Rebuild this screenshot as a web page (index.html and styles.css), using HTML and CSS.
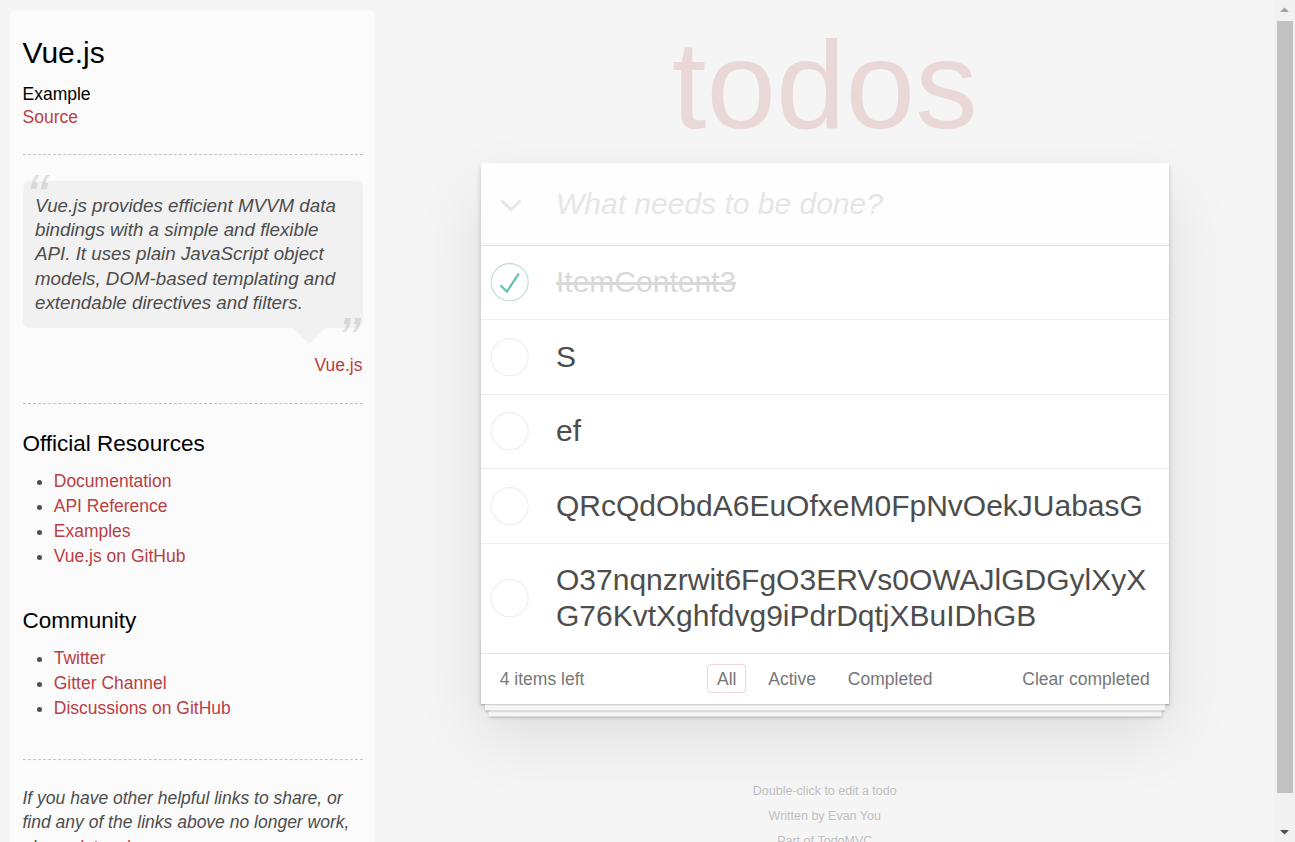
FILE: index.html
```html
<!DOCTYPE html>
<html lang="en">
<head>
<meta charset="utf-8">
<title>Vue.js • TodoMVC</title>
<link rel="stylesheet" href="styles.css">
</head>
<body>
<div class="page">
  <aside class="learn">
    <header class="learn-head">
      <h3>Vue.js</h3>
      <div class="source-links">
        <h5>Example</h5>
        <a href="#">Source</a>
      </div>
    </header>
    <hr>
    <blockquote class="quote speech-bubble">
      <p>Vue.js provides efficient MVVM data bindings with a simple and flexible API. It uses plain JavaScript object models, DOM-based templating and extendable directives and filters.</p>
      <footer class="quote-foot"><a href="#">Vue.js</a></footer>
    </blockquote>
    <hr>
    <h4>Official Resources</h4>
    <ul class="links">
      <li><a href="#">Documentation</a></li>
      <li><a href="#">API Reference</a></li>
      <li><a href="#">Examples</a></li>
      <li><a href="#">Vue.js on GitHub</a></li>
    </ul>
    <h4>Community</h4>
    <ul class="links">
      <li><a href="#">Twitter</a></li>
      <li><a href="#">Gitter Channel</a></li>
      <li><a href="#">Discussions on GitHub</a></li>
    </ul>
    <footer class="learn-foot">
      <hr>
      <em>If you have other helpful links to share, or find any of the links above no longer work, please <a href="#">let us know</a>.</em>
    </footer>
  </aside>

  <main class="main-col">
    <h1 class="title">todos</h1>
    <section class="todoapp">
      <header class="header">
        <span class="toggle-all">
          <svg width="22" height="15" viewBox="0 0 22 15"><polyline points="1.5,2.5 11,11.5 20.5,2.5" fill="none" stroke="#e6e6e6" stroke-width="3"/></svg>
        </span>
        <input class="new-todo" placeholder="What needs to be done?">
      </header>
      <ul class="todo-list">
        <li class="todo completed">
          <svg class="toggle" width="50" height="50" viewBox="-10 -18 100 135"><circle cx="50" cy="50" r="50" fill="none" stroke="#bddad5" stroke-width="3"/><path fill="#5dc2af" d="M72 25L42 71 27 56l-4 4 20 20 34-52z"/></svg>
          <label>ItemContent3</label>
        </li>
        <li class="todo">
          <svg class="toggle" width="50" height="50" viewBox="-10 -18 100 135"><circle cx="50" cy="50" r="50" fill="none" stroke="#ededed" stroke-width="3"/></svg>
          <label>S</label>
        </li>
        <li class="todo">
          <svg class="toggle" width="50" height="50" viewBox="-10 -18 100 135"><circle cx="50" cy="50" r="50" fill="none" stroke="#ededed" stroke-width="3"/></svg>
          <label>ef</label>
        </li>
        <li class="todo">
          <svg class="toggle" width="50" height="50" viewBox="-10 -18 100 135"><circle cx="50" cy="50" r="50" fill="none" stroke="#ededed" stroke-width="3"/></svg>
          <label>QRcQdObdA6EuOfxeM0FpNvOekJUabasG</label>
        </li>
        <li class="todo">
          <svg class="toggle" width="50" height="50" viewBox="-10 -18 100 135"><circle cx="50" cy="50" r="50" fill="none" stroke="#ededed" stroke-width="3"/></svg>
          <label>O37nqnzrwit6FgO3ERVs0OWAJlGDGylXyXG76KvtXghfdvg9iPdrDqtjXBuIDhGB</label>
        </li>
      </ul>
      <footer class="footer">
        <span class="todo-count"><strong>4</strong> items left</span>
        <ul class="filters">
          <li><a href="#" class="selected">All</a></li>
          <li><a href="#">Active</a></li>
          <li><a href="#">Completed</a></li>
        </ul>
        <span class="clear-completed">Clear completed</span>
      </footer>
    </section>
    <footer class="info">
      <p>Double-click to edit a todo</p>
      <p>Written by <a href="#">Evan You</a></p>
      <p>Part of <a href="#">TodoMVC</a></p>
    </footer>
  </main>
</div>

<div class="scrollbar" aria-hidden="true">
  <div class="sb-button">
    <svg width="21" height="21" viewBox="0 0 21 21"><polygon points="6,12 10.5,7.5 15,12" fill="#a3a3a3"/></svg>
  </div>
  <div class="sb-track"><div class="sb-thumb"></div></div>
  <div class="sb-button">
    <svg width="21" height="21" viewBox="0 0 21 21"><polygon points="6,9 15,9 10.5,13.5" fill="#505050"/></svg>
  </div>
</div>
</body>
</html>
```

FILE: styles.css
```css
html, body {
  margin: 0;
  padding: 0;
}

html {
  background: #f5f5f5;
}

body {
  font-family: "Liberation Sans", Arial, Helvetica, sans-serif;
  font-size: 17.5px;
  line-height: 24.5px;
  color: #4d4d4d;
  background: #f5f5f5;
  font-weight: 300;
}

a {
  color: #b83f45;
  text-decoration: none;
  font-weight: normal;
}

.page {
  display: flex;
  align-items: flex-start;
}

/* ---------- learn sidebar ---------- */
.learn {
  flex: none;
  width: 365px;
  box-sizing: border-box;
  margin: 10px 0 0 10px;
  padding: 12.5px;
  background: rgba(255, 255, 255, 0.6);
  border-radius: 6.25px;
}

.learn h3,
.learn h4,
.learn h5 {
  margin: 12.5px 0;
  font-weight: 400;
  line-height: 1.2;
  color: #000;
}

.learn h3 {
  font-size: 30px;
}

.learn h4 {
  font-size: 22.5px;
}

.learn h5 {
  font-size: 17.5px;
  margin-bottom: 0;
}

.source-links a {
  display: block;
}

.learn hr {
  margin: 25px 0;
  border: 0;
  border-top: 1px dashed #c5c5c5;
  border-bottom: 1px dashed #f7f7f7;
}

.quote {
  margin: 25px 0 75px 0;
}

.speech-bubble {
  position: relative;
  padding: 12.5px;
  background: rgba(0, 0, 0, 0.04);
  border-radius: 6.25px;
}

.speech-bubble::after {
  content: "";
  position: absolute;
  top: 100%;
  right: 37.5px;
  border: 16.25px solid transparent;
  border-top-color: rgba(0, 0, 0, 0.04);
}

.quote p {
  margin: 0;
  font-size: 18.75px;
  line-height: 1.3;
  font-style: italic;
  font-weight: 300;
}

.quote p::before {
  content: "\201C";
  font-size: 62.5px;
  opacity: 0.15;
  position: absolute;
  top: -25px;
  left: 3.75px;
}

.quote p::after {
  content: "\201D";
  font-size: 62.5px;
  opacity: 0.15;
  position: absolute;
  bottom: -52.5px;
  right: 3.75px;
}

.quote-foot {
  position: absolute;
  bottom: -50px;
  right: 0;
}

.links {
  margin: 0 0 37.5px 31.25px;
  padding: 0;
}

.links li {
  line-height: 25px;
}

.learn-foot em {
  font-style: italic;
}

/* ---------- main column ---------- */
.main-col {
  flex: none;
  width: 687.5px;
  margin-left: 106px;
}

.title {
  margin: 22px 0 0;
  height: 125px;
  font-size: 125px;
  line-height: 125px;
  font-weight: 100;
  text-align: center;
  color: rgba(175, 47, 47, 0.15);
}

.todoapp {
  position: relative;
  margin: 16px 0 0;
  background: #fff;
  box-shadow: 0 2.5px 5px 0 rgba(0, 0, 0, 0.2), 0 31px 62px 0 rgba(0, 0, 0, 0.1);
}

.header {
  display: flex;
  align-items: center;
  height: 81.5px;
  box-shadow: inset 0 -2px 1px rgba(0, 0, 0, 0.03);
  background: rgba(0, 0, 0, 0.003);
}

.toggle-all {
  flex: none;
  width: 60px;
  display: flex;
  justify-content: center;
  padding-top: 4px;
}

.toggle-all svg {
  display: block;
}

.new-todo {
  flex: 1;
  min-width: 0;
  height: 100%;
  box-sizing: border-box;
  margin: 0;
  padding: 0 20px 0 15px;
  border: 0;
  outline: none;
  background: transparent;
  font-family: inherit;
  font-size: 30px;
  line-height: 42px;
  color: inherit;
}

.new-todo::placeholder {
  font-style: italic;
  font-weight: 300;
  color: #e6e6e6;
}

.todo-list {
  margin: 0;
  padding: 0;
  list-style: none;
  border-top: 1px solid #e6e6e6;
}

.todo {
  display: flex;
  align-items: center;
  font-size: 30px;
  border-bottom: 1px solid #ededed;
}

.todo:last-child {
  border-bottom: none;
}

.toggle {
  flex: none;
  display: block;
}

.todo label {
  flex: 1;
  min-width: 0;
  padding: 18.75px 18.75px 18.75px 25px;
  line-height: 36px;
  word-break: break-all;
  color: #4d4d4d;
}

.todo.completed label {
  color: #d9d9d9;
  text-decoration: line-through;
}

/* ---------- footer ---------- */
.footer {
  position: relative;
  display: grid;
  grid-template-columns: 1fr auto 1fr;
  align-items: center;
  height: 25px;
  padding: 12.5px 18.75px;
  border-top: 1px solid #e6e6e6;
  color: #777;
  font-size: 17.5px;
  line-height: 25px;
}

.footer::before {
  content: "";
  position: absolute;
  right: 0;
  bottom: 0;
  left: 0;
  height: 62.5px;
  overflow: hidden;
  pointer-events: none;
  box-shadow: 0 1.25px 1.25px rgba(0, 0, 0, 0.2),
    0 10px 0 -3.75px #f6f6f6,
    0 11.25px 1.25px -3.75px rgba(0, 0, 0, 0.2),
    0 20px 0 -7.5px #f6f6f6,
    0 21.25px 2.5px -7.5px rgba(0, 0, 0, 0.2);
}

.todo-count strong {
  font-weight: 300;
}

.filters {
  margin: 0;
  padding: 0;
  list-style: none;
  text-align: center;
}

.filters li {
  display: inline;
}

.filters a {
  color: inherit;
  margin: 3.75px;
  padding: 3.75px 8.75px;
  border: 1.25px solid transparent;
  border-radius: 3.75px;
}

.filters a.selected {
  border-color: rgba(175, 47, 47, 0.2);
}

.clear-completed {
  text-align: right;
}

.info {
  margin: 81.25px 0 0;
  color: #bfbfbf;
  font-size: 12.5px;
  text-shadow: 0 1px 0 rgba(255, 255, 255, 0.5);
  text-align: center;
}

.info p {
  margin: 12.5px 0;
  line-height: 1;
}

.info a {
  color: inherit;
  font-weight: 400;
}

/* ---------- window scrollbar (drawn over the page edge) ---------- */
.scrollbar {
  position: fixed;
  top: 0;
  right: 0;
  bottom: 0;
  width: 21px;
  display: flex;
  flex-direction: column;
  background: #f1f1f1;
}

.sb-button {
  flex: none;
  height: 21px;
}

.sb-button svg {
  display: block;
}

.sb-track {
  flex: 1;
  padding: 0 2.5px;
}

.sb-thumb {
  height: 772px;
  background: #c1c1c1;
}
```
